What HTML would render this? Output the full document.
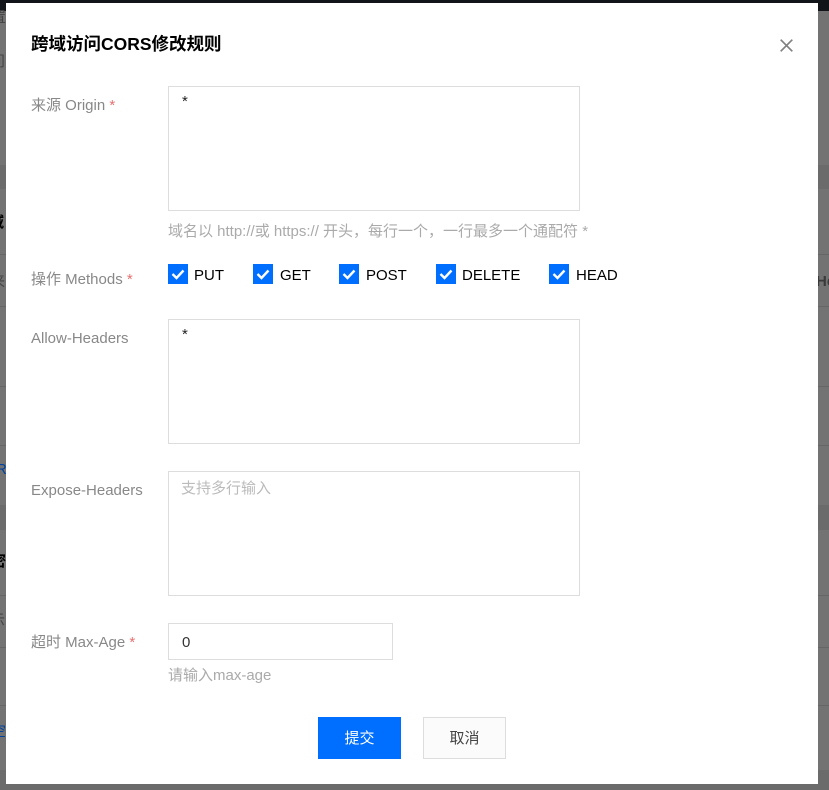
<!DOCTYPE html>
<html lang="zh">
<head>
<meta charset="utf-8">
<style>
html,body{margin:0;padding:0;width:829px;height:790px;overflow:hidden;background:#737373;}
body{position:relative;font-family:"Liberation Sans","Noto Sans CJK SC",sans-serif;font-size:15px;}
.a{position:absolute;white-space:nowrap;line-height:20px;}
.r{position:absolute;box-sizing:border-box;}
.bg{position:absolute;background:#666;height:1px;left:0;width:829px;}
.band{position:absolute;background:#6b6b6b;left:0;width:829px;}
.lab{color:#888;left:31px;}
.lab i{color:#e87070;font-style:normal;}
.box{position:absolute;box-sizing:border-box;border:1px solid #ddd;background:#fff;left:168px;width:412px;height:125px;}
.v{color:#222;}
.hint{color:#aaa;left:168px;}
.cb{position:absolute;top:264px;width:20px;height:20px;background:#006eff;}
.cb svg{display:block;}
.cl{color:#000;top:266px;}
</style>
</head>
<body>
<div class="r" style="left:0;top:0;width:829px;height:11px;background:#11151a;"></div>
<div class="band" style="top:165px;height:24px;"></div>
<div class="band" style="top:505px;height:25px;"></div>
<div class="band" style="top:770px;height:20px;"></div>
<div class="bg" style="top:254px;"></div>
<div class="bg" style="top:306px;"></div>
<div class="bg" style="top:386px;"></div>
<div class="bg" style="top:445px;"></div>
<div class="bg" style="top:595px;"></div>
<div class="bg" style="top:647px;"></div>
<div class="bg" style="top:705px;"></div>
<div class="a" style="left:-9px;top:8px;color:#444;">置</div>
<div class="a" style="left:-10px;top:52px;color:#444;">问</div>
<div class="a" style="left:-11px;top:213px;color:#000;font-weight:bold;">域</div>
<div class="a" style="left:-10px;top:272px;color:#444;">来</div>
<div class="a" style="left:-4px;top:460px;color:#00429e;">R</div>
<div class="a" style="left:-9px;top:552px;color:#000;font-weight:bold;">密</div>
<div class="a" style="left:-10px;top:611px;color:#444;">示</div>
<div class="a" style="left:-9px;top:722px;color:#00429e;">空</div>
<div class="a" style="left:816px;top:272px;color:#3a3a3a;font-weight:bold;">He</div>

<div class="r" style="left:6px;top:3px;width:812px;height:781px;background:#fff;"></div>

<div class="a" style="left:31px;top:34px;font-size:17.5px;font-weight:bold;color:#000;">跨域访问CORS修改规则</div>
<svg class="r" style="left:780px;top:39px;" width="13" height="13" viewBox="0 0 13 13"><path d="M0.7 0.7L12.3 12.3M12.3 0.7L0.7 12.3" stroke="#808080" stroke-width="1.7" fill="none"/></svg>

<div class="a lab" style="top:96px;">来源 Origin <i>*</i></div>
<div class="box" style="top:86px;"></div>
<div class="a v" style="left:182px;top:92px;">*</div>
<div class="a hint" style="top:222px;">域名以 http://或 https:// 开头，每行一个，一行最多一个通配符 *</div>

<div class="a lab" style="top:270px;">操作 Methods <i>*</i></div>
<div class="cb" style="left:168px;"><svg width="20" height="20" viewBox="0 0 20 20"><path d="M4.5 10L8.5 14L15.5 6.5" stroke="#fff" stroke-width="2.4" fill="none"/></svg></div>
<div class="a cl" style="left:194px;">PUT</div>
<div class="cb" style="left:253px;"><svg width="20" height="20" viewBox="0 0 20 20"><path d="M4.5 10L8.5 14L15.5 6.5" stroke="#fff" stroke-width="2.4" fill="none"/></svg></div>
<div class="a cl" style="left:280px;">GET</div>
<div class="cb" style="left:339px;"><svg width="20" height="20" viewBox="0 0 20 20"><path d="M4.5 10L8.5 14L15.5 6.5" stroke="#fff" stroke-width="2.4" fill="none"/></svg></div>
<div class="a cl" style="left:366px;">POST</div>
<div class="cb" style="left:436px;"><svg width="20" height="20" viewBox="0 0 20 20"><path d="M4.5 10L8.5 14L15.5 6.5" stroke="#fff" stroke-width="2.4" fill="none"/></svg></div>
<div class="a cl" style="left:462px;">DELETE</div>
<div class="cb" style="left:549px;"><svg width="20" height="20" viewBox="0 0 20 20"><path d="M4.5 10L8.5 14L15.5 6.5" stroke="#fff" stroke-width="2.4" fill="none"/></svg></div>
<div class="a cl" style="left:576px;">HEAD</div>

<div class="a lab" style="top:329px;">Allow-Headers</div>
<div class="box" style="top:319px;"></div>
<div class="a v" style="left:182px;top:325px;">*</div>

<div class="a lab" style="top:481px;">Expose-Headers</div>
<div class="box" style="top:471px;"></div>
<div class="a" style="left:181px;top:479px;color:#bbb;">支持多行输入</div>

<div class="a lab" style="top:633px;">超时 Max-Age <i>*</i></div>
<div class="r" style="left:168px;top:623px;width:225px;height:37px;border:1px solid #ddd;background:#fff;"></div>
<div class="a" style="left:182px;top:633px;color:#333;">0</div>
<div class="a hint" style="top:666px;">请输入max-age</div>

<div class="r" style="left:318px;top:717px;width:83px;height:42px;background:#006eff;color:#fff;text-align:center;line-height:43px;">提交</div>
<div class="r" style="left:423px;top:717px;width:83px;height:42px;background:#fbfbfb;border:1px solid #ddd;color:#444;text-align:center;line-height:41px;">取消</div>
</body>
</html>
